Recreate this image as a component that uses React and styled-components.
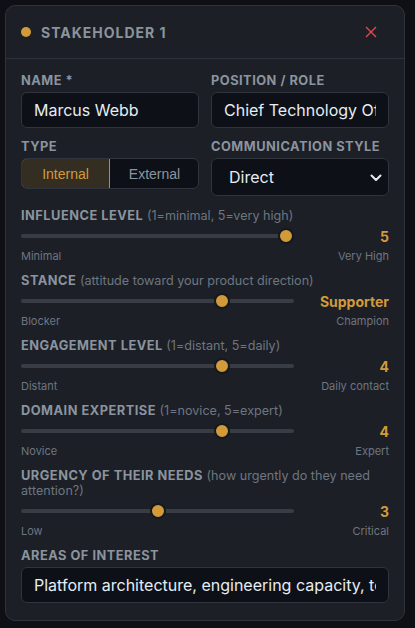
import React, { useState } from 'react';
import styled, { createGlobalStyle } from 'styled-components';

const GlobalStyle = createGlobalStyle`
  html, body {
    margin: 0;
    padding: 0;
    background: #0e1015;
    font-family: Inter, "Noto Sans", sans-serif;
  }
  * { box-sizing: border-box; }
`;

const sliders = [
  { key: 'influence', title: 'Influence Level', hint: '(1=minimal, 5=very high)', min: 'Minimal', max: 'Very High', value: 5 },
  { key: 'stance', title: 'Stance', hint: '(attitude toward your product direction)', min: 'Blocker', max: 'Champion', value: 4, labels: ['Blocker', 'Skeptic', 'Neutral', 'Supporter', 'Champion'] },
  { key: 'engagement', title: 'Engagement Level', hint: '(1=distant, 5=daily)', min: 'Distant', max: 'Daily contact', value: 4 },
  { key: 'expertise', title: 'Domain Expertise', hint: '(1=novice, 5=expert)', min: 'Novice', max: 'Expert', value: 4 },
  { key: 'urgency', title: 'Urgency of Their Needs', hint: '(how urgently do they need attention?)', min: 'Low', max: 'Critical', value: 3 },
];

const App = () => {
  const [type, setType] = useState('internal');
  const [values, setValues] = useState(
    Object.fromEntries(sliders.map((s) => [s.key, s.value]))
  );

  return (
    <Page>
      <GlobalStyle />
      <Card>
        <Header>
          <Title>
            <Dot />
            Stakeholder 1
          </Title>
          <CloseButton aria-label="Remove">
            <svg width="12" height="12" viewBox="0 0 12 12">
              <path d="M1 1 L11 11 M11 1 L1 11" stroke="#e5484d" strokeWidth="1.4" fill="none" />
            </svg>
          </CloseButton>
        </Header>
        <Body>
          <Grid>
            <Field>
              <Label>Name *</Label>
              <Input defaultValue="Marcus Webb" />
            </Field>
            <Field>
              <Label>Position / Role</Label>
              <Input defaultValue="Chief Technology Officer" />
            </Field>
            <Field>
              <Label>Type</Label>
              <Toggle>
                <ToggleButton $active={type === 'internal'} onClick={() => setType('internal')}>
                  Internal
                </ToggleButton>
                <ToggleButton $active={type === 'external'} onClick={() => setType('external')}>
                  External
                </ToggleButton>
              </Toggle>
            </Field>
            <Field>
              <Label>Communication Style</Label>
              <SelectWrap>
                <Select defaultValue="direct">
                  <option value="direct">Direct</option>
                  <option value="diplomatic">Diplomatic</option>
                  <option value="analytical">Analytical</option>
                </Select>
                <Chevron width="12" height="8" viewBox="0 0 12 8">
                  <path d="M1.5 1.5 L6 6 L10.5 1.5" stroke="#e6edf3" strokeWidth="2" fill="none" strokeLinecap="round" strokeLinejoin="round" />
                </Chevron>
              </SelectWrap>
            </Field>
          </Grid>

          {sliders.map((s) => {
            const v = values[s.key];
            return (
              <SliderGroup key={s.key}>
                <Label>
                  {s.title} <Hint>{s.hint}</Hint>
                </Label>
                <SliderRow>
                  <Range
                    type="range"
                    min="1"
                    max="5"
                    step="1"
                    value={v}
                    onChange={(e) => setValues({ ...values, [s.key]: Number(e.target.value) })}
                  />
                  <Value>{s.labels ? s.labels[v - 1] : v}</Value>
                </SliderRow>
                <Ends>
                  <span>{s.min}</span>
                  <span>{s.max}</span>
                </Ends>
              </SliderGroup>
            );
          })}

          <Field>
            <Label>Areas of Interest</Label>
            <Input defaultValue="Platform architecture, engineering capacity, technical debt" />
          </Field>
        </Body>
      </Card>
    </Page>
  );
};

const Page = styled.div`
  padding: 5px 10px 9px 5px;
`;

const Card = styled.div`
  width: 400px;
  background: #1c1f26;
  border: 1px solid #2e333b;
  border-radius: 10px;
  overflow: hidden;
`;

const Header = styled.div`
  display: flex;
  align-items: center;
  justify-content: space-between;
  height: 53px;
  padding: 0 27px 0 15px;
  border-bottom: 1px solid #2e333b;
`;

const Title = styled.div`
  display: flex;
  align-items: center;
  gap: 10px;
  color: #8b949e;
  font-size: 14px;
  font-weight: 700;
  letter-spacing: 1px;
  text-transform: uppercase;
`;

const Dot = styled.span`
  width: 10px;
  height: 10px;
  border-radius: 50%;
  background: #d29b3a;
`;

const CloseButton = styled.button`
  display: flex;
  padding: 0;
  border: none;
  background: none;
  cursor: pointer;
`;

const Body = styled.div`
  display: flex;
  flex-direction: column;
  gap: 9px;
  padding: 14px 15px 17px 15px;
`;

const Grid = styled.div`
  display: grid;
  grid-template-columns: 1fr 1fr;
  column-gap: 12px;
  row-gap: 11px;
  margin-bottom: 3px;
`;

const Field = styled.div`
  display: flex;
  flex-direction: column;
  gap: 4px;
  min-width: 0;
`;

const Label = styled.div`
  color: #8b949e;
  font-size: 12.8px;
  font-weight: 700;
  line-height: 15px;
  letter-spacing: 0.5px;
  text-transform: uppercase;
`;

const Hint = styled.span`
  color: #6e7681;
  font-size: 12.6px;
  font-weight: 400;
  letter-spacing: 0;
  text-transform: none;
`;

const Input = styled.input`
  width: 100%;
  height: 36px;
  padding: 0 12px;
  background: #0d1016;
  border: 1px solid #30353d;
  border-radius: 6px;
  color: #e6edf3;
  font-family: Inter, "Noto Sans", sans-serif;
  font-size: 16px;
  outline: none;

  &:focus {
    border-color: #d29b3a;
  }
`;

const Toggle = styled.div`
  display: grid;
  grid-template-columns: 1fr 1fr;
  height: 31px;
  background: #0d1016;
  border: 1px solid #30353d;
  border-radius: 6px;
  overflow: hidden;
`;

const ToggleButton = styled.button`
  margin: -1px 0 -1px -1px;
  border: 1px solid ${(p) => (p.$active ? '#c08a35' : 'transparent')};
  border-radius: ${(p) => (p.$active ? '6px 0 0 6px' : '0')};
  background: ${(p) => (p.$active ? '#342d22' : 'transparent')};
  color: ${(p) => (p.$active ? '#d29b3a' : '#8b949e')};
  font-family: "Liberation Sans", Arial, sans-serif;
  font-size: 14px;
  cursor: pointer;

  & + & {
    margin: -1px -1px -1px 0;
  }
`;

const SelectWrap = styled.div`
  position: relative;
`;

const Select = styled.select`
  appearance: none;
  width: 100%;
  height: 38px;
  padding: 0 30px 0 17px;
  background: #0d1016;
  border: 1px solid #30353d;
  border-radius: 6px;
  color: #e6edf3;
  font-family: Inter, "Noto Sans", sans-serif;
  font-size: 16px;
  outline: none;
`;

const Chevron = styled.svg`
  position: absolute;
  right: 7px;
  top: 16px;
  pointer-events: none;
`;

const SliderGroup = styled.div`
  display: flex;
  flex-direction: column;
`;

const SliderRow = styled.div`
  display: flex;
  align-items: center;
  gap: 16px;
  height: 24px;
  margin-top: 1px;
`;

const Range = styled.input`
  appearance: none;
  -webkit-appearance: none;
  flex: 0 0 273px;
  height: 4px;
  margin: 0;
  background: #383d45;
  border-radius: 2px;
  outline: none;

  &::-webkit-slider-thumb {
    -webkit-appearance: none;
    width: 16px;
    height: 16px;
    border-radius: 50%;
    background: #d29b3a;
    border: 2px solid #15181d;
    cursor: pointer;
  }
`;

const Value = styled.div`
  flex: 1;
  text-align: right;
  color: #d29b3a;
  font-size: 14px;
  font-weight: 700;
`;

const Ends = styled.div`
  display: flex;
  justify-content: space-between;
  color: #6e7681;
  font-size: 11px;
  line-height: 16px;
`;

export default App;
